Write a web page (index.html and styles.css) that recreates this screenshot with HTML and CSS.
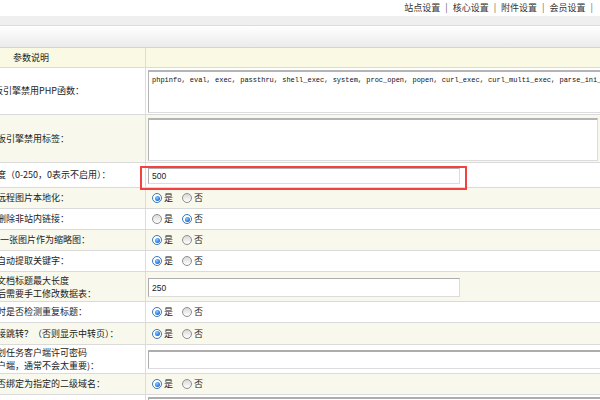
FILE: index.html
```html
<!DOCTYPE html>
<html lang="zh-CN">
<head>
<meta charset="utf-8">
<link rel="stylesheet" href="styles.css">
</head>
<body>
<div class="topnav">
  <span class="lnk">站点设置</span><span class="sep">|</span><span class="lnk">核心设置</span><span class="sep">|</span><span class="lnk">附件设置</span><span class="sep">|</span><span class="lnk">会员设置</span><span class="sep">|</span>
</div>
<div class="band"></div>
<div class="toolbar"></div>
<div class="table">
  <div class="row head h20"><div class="lab"><span class="hd">参数说明</span></div><div class="val"></div></div>
  <div class="row white h47"><div class="lab"><span class="t c6">板引擎禁用PHP函数：</span></div><div class="val top"><textarea class="ta ta1" wrap="off">phpinfo, eval, exec, passthru, shell_exec, system, proc_open, popen, curl_exec, curl_multi_exec, parse_ini_file, show_source</textarea></div></div>
  <div class="row yel h48"><div class="lab"><span class="t">板引擎禁用标签：</span></div><div class="val top"><textarea class="ta ta2" wrap="off"></textarea></div></div>
  <div class="row white h25"><div class="lab"><span class="t">度（0-250，0表示不启用）：</span></div><div class="val top rel"><input class="txt in3" value="500"><div class="mark"></div></div></div>
  <div class="row yel h21"><div class="lab"><span class="t">远程图片本地化：</span></div><div class="val pad"><span class="opt"><span class="radio on"></span>是</span><span class="opt"><span class="radio"></span>否</span></div></div>
  <div class="row white h21"><div class="lab"><span class="t">删除非站内链接：</span></div><div class="val pad"><span class="opt"><span class="radio"></span>是</span><span class="opt"><span class="radio on"></span>否</span></div></div>
  <div class="row yel h21"><div class="lab"><span class="t c0">一张图片作为缩略图：</span></div><div class="val pad"><span class="opt"><span class="radio on"></span>是</span><span class="opt"><span class="radio"></span>否</span></div></div>
  <div class="row white h21"><div class="lab"><span class="t">自动提取关键字：</span></div><div class="val pad"><span class="opt"><span class="radio on"></span>是</span><span class="opt"><span class="radio"></span>否</span></div></div>
  <div class="row yel h30"><div class="lab"><span class="t two">文档标题最大长度<br>后需要手工修改数据表：</span></div><div class="val top"><input class="txt in8" value="250"></div></div>
  <div class="row white h21"><div class="lab"><span class="t">时是否检测重复标题：</span></div><div class="val pad"><span class="opt"><span class="radio on"></span>是</span><span class="opt"><span class="radio"></span>否</span></div></div>
  <div class="row yel h22"><div class="lab"><span class="t">接跳转？（否则显示中转页）：</span></div><div class="val pad"><span class="opt"><span class="radio on"></span>是</span><span class="opt"><span class="radio"></span>否</span></div></div>
  <div class="row white h29"><div class="lab"><span class="t two">划任务客户端许可密码<br>户端，通常不会太重要)：</span></div><div class="val top"><input class="txt in11" value=""></div></div>
  <div class="row yel h21"><div class="lab"><span class="t">否绑定为指定的二级域名：</span></div><div class="val pad"><span class="opt"><span class="radio on"></span>是</span><span class="opt"><span class="radio"></span>否</span></div></div>
  <div class="row white h30"><div class="lab"><span class="t"></span></div><div class="val top"><input class="txt in13" value=""></div></div>
</div>
</body>
</html>
```
FILE: styles.css
```css
html, body {
  margin: 0;
  padding: 0;
  overflow: hidden;
  background: #fff;
}
body {
  width: 600px;
  height: 400px;
  font-family: "Noto Sans CJK SC", "Noto Sans", sans-serif;
  font-size: 9px;
  color: #222;
}
.topnav {
  height: 16px;
  line-height: 16px;
  text-align: right;
  padding-right: 2px;
  white-space: nowrap;
  color: #333;
}
.sep {
  padding: 0 5px;
  color: #666;
}
.band {
  height: 10px;
  box-sizing: border-box;
  background: #efefef;
  border-bottom: 1px solid #dddddd;
}
.toolbar {
  height: 22px;
  box-sizing: border-box;
  background: linear-gradient(#ffffff, #ebebeb);
  border-bottom: 1px solid #d4d4d4;
}
.table {
  width: 600px;
}
.row {
  display: grid;
  grid-template-columns: 146px minmax(0, 1fr);
  box-sizing: border-box;
  border-bottom: 1px solid #dadada;
}
.h20 { height: 20px; }
.h21 { height: 21px; }
.h22 { height: 22px; }
.h25 { height: 25px; }
.h29 { height: 29px; }
.h30 { height: 30px; }
.h47 { height: 47px; }
.h48 { height: 48px; }
.head { background: #f9f9e4; }
.yel { background: #f8f9ec; }
.white { background: #ffffff; }
.lab {
  display: flex;
  align-items: center;
  overflow: hidden;
  white-space: nowrap;
  border-right: 1px solid #dcdcdc;
}
.hd {
  margin-left: 13px;
}
.t {
  display: block;
  margin-left: -3px;
  line-height: 12px;
}
.t.c6 { margin-left: -6px; }
.t.c0 { margin-left: 0; }
.t.two { line-height: 13px; }
.val {
  display: flex;
  align-items: center;
  min-width: 0;
}
.val.top {
  align-items: flex-start;
}
.val.rel {
  position: relative;
}
.val.pad {
  padding-left: 6px;
}
.ta {
  box-sizing: border-box;
  margin: 0 0 0 2px;
  padding: 4px 3px 2px;
  width: 600px;
  flex: none;
  resize: none;
  overflow: hidden;
  background: #fff;
  border: 1px solid;
  border-color: #b4b4b4 #dcdcdc #dcdcdc #b4b4b4;
  border-top-width: 2px;
  font-family: "Liberation Mono", monospace;
  font-size: 7px;
  line-height: 9px;
  color: #111;
}
.ta1 {
  margin-top: 2px;
  height: 43px;
}
.ta2 {
  margin-top: 3px;
  height: 43px;
  width: 450px;
}
.txt {
  box-sizing: border-box;
  margin: 0 0 0 2px;
  padding: 0 3px;
  flex: none;
  background: #fff;
  border: 1px solid;
  border-color: #adadad #dcdcdc #dcdcdc #adadad;
  font-family: "Liberation Sans", Arial, sans-serif;
  font-size: 8.5px;
  color: #222;
  outline: none;
}
.in3 {
  margin-top: 5px;
  width: 312px;
  height: 16px;
}
.in8 {
  margin-top: 6px;
  width: 312px;
  height: 19px;
}
.in11 {
  margin-top: 5px;
  width: 600px;
  height: 19px;
  border-top-width: 2px;
}
.in13 {
  margin-top: 2px;
  width: 600px;
  height: 19px;
  border-top-width: 2px;
}
.mark {
  position: absolute;
  left: -6px;
  top: 3px;
  width: 327px;
  height: 24px;
  box-sizing: border-box;
  border: 2px solid #f54040;
  z-index: 2;
}
.opt {
  display: inline-flex;
  align-items: center;
  margin-right: 9px;
  line-height: 12px;
}
.radio {
  display: inline-block;
  box-sizing: border-box;
  width: 10px;
  height: 10px;
  border-radius: 50%;
  border: 1px solid #8e8f8f;
  background: linear-gradient(#d9d9d9, #ffffff);
  margin-right: 2px;
  position: relative;
}
.radio.on {
  border-color: #3a78b8;
  background: #fff;
}
.radio.on::after {
  content: "";
  position: absolute;
  left: 1.5px;
  top: 1.5px;
  width: 5px;
  height: 5px;
  border-radius: 50%;
  background: radial-gradient(circle at 40% 35%, #8fd0ff, #1f6ad8 70%);
}
```
